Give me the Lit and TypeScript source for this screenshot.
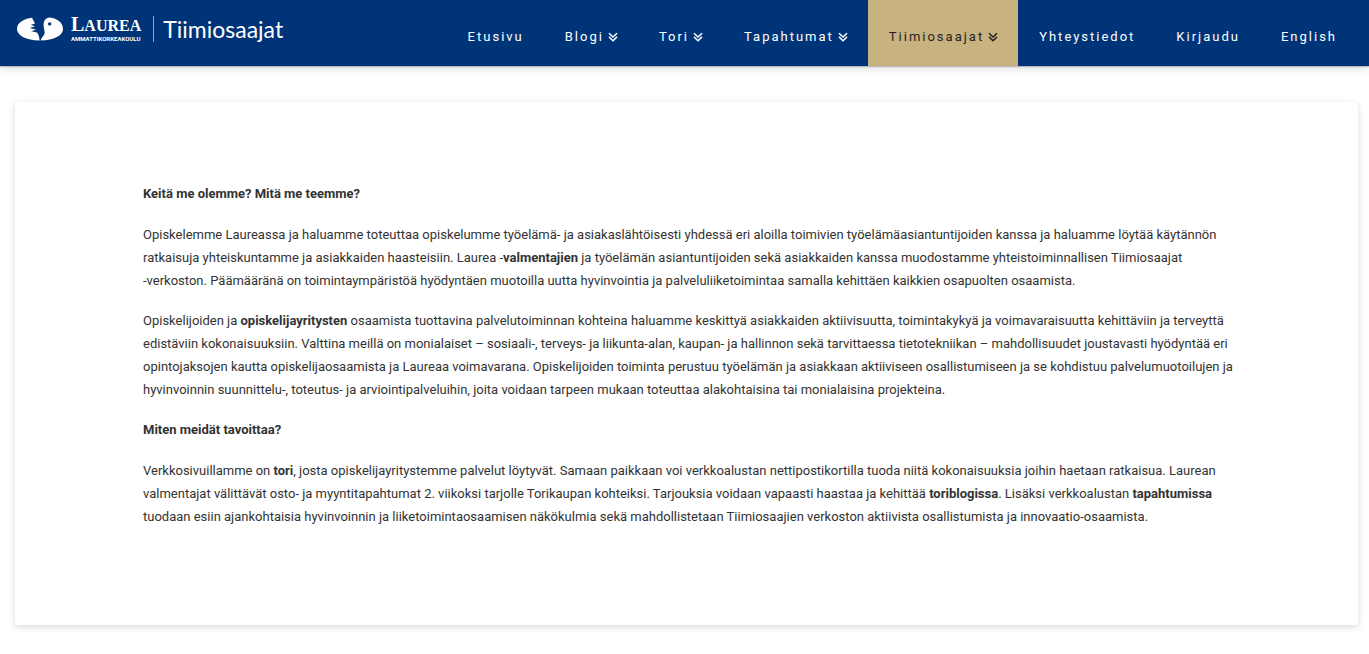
import { LitElement, html, css, svg, nothing } from "lit";
import { customElement, property } from "lit/decorators.js";

interface NavItem {
  label: string;
  menu?: boolean;
  active?: boolean;
}

const NAV: NavItem[] = [
  { label: "Etusivu" },
  { label: "Blogi", menu: true },
  { label: "Tori", menu: true },
  { label: "Tapahtumat", menu: true },
  { label: "Tiimiosaajat", menu: true, active: true },
  { label: "Yhteystiedot" },
  { label: "Kirjaudu" },
  { label: "English" },
];

const chevrons = svg`<path d="M1 1.2 5 5 9 1.2M1 4.9 5 8.7 9 4.9" fill="none" stroke="currentColor" stroke-width="1.5"/>`;

@customElement("site-logo")
export class SiteLogo extends LitElement {
  static styles = css`
    :host {
      display: block;
      flex: none;
    }
    .brand {
      display: flex;
      align-items: center;
      color: #fff;
      text-decoration: none;
    }
    .mark {
      display: block;
      width: 46px;
      height: 24px;
    }
    .school {
      display: flex;
      flex-direction: column;
      margin-left: 8px;
      padding-right: 12px;
    }
    .name {
      font: bold 16px/18px "Liberation Serif", serif;
    }
    .first {
      font-size: 20px;
    }
    .kind {
      font: bold 6px/7px Roboto, sans-serif;
    }
    .team {
      border-left: 1px solid #8fa6c6;
      padding-left: 9px;
      font: 23px/26px Lato, sans-serif;
    }
  `;

  render() {
    return html`
      <a class="brand" href="#">
        <svg class="mark" viewBox="0 0 46 24" aria-hidden="true">
          <path
            fill="#fff"
            d="M15 .8 18 6.400 13.600 8 18.200 9.300 12.600 11 19 12.600 14.400 14.200 20 15.600C21.600 17.400 22.300 20 22.600 23.400 10 23.600 0 18.600 0 12 0 6 6.500 1.800 15 .8Z"
          />
          <path
            fill="#fff"
            fill-rule="evenodd"
            d="M27.500 3.600C29 1.500 30.600.6 32.600.6 40.500 1.400 46 6 46 12 46 18.600 37 23.200 23.600 23.500 24 21.500 25.200 20.200 26.600 18.400 29 15.400 26.600 13.200 26.600 8.600 26.600 6.500 26.800 4.700 27.500 3.600ZM32.700 5.200A1.700 1.700 0 1 0 32.700 8.600 1.700 1.700 0 1 0 32.700 5.200Z"
          />
        </svg>
        <span class="school">
          <span class="name"><span class="first">L</span>AUREA</span>
          <span class="kind">AMMATTIKORKEAKOULU</span>
        </span>
        <span class="team">Tiimiosaajat</span>
      </a>
    `;
  }
}

@customElement("site-nav")
export class SiteNav extends LitElement {
  @property({ attribute: false }) items: NavItem[] = [];

  static styles = css`
    .list {
      display: flex;
      margin: 0;
      padding: 0;
      list-style: none;
    }
    .link {
      display: flex;
      align-items: center;
      box-sizing: border-box;
      height: 66px;
      padding: 8px 20px 0 21px;
      color: #fff;
      font: 13px/20px Roboto, sans-serif;
      letter-spacing: 2px;
      text-decoration: none;
      white-space: nowrap;
    }
    .active {
      background: #c7b280;
      color: #222;
    }
    .arrow {
      width: 10px;
      height: 10px;
      margin-left: 4px;
    }
  `;

  render() {
    return html`
      <nav>
        <ul class="list">
          ${this.items.map(
            (item) => html`
              <li>
                <a class="link ${item.active ? "active" : ""}" href="#"
                  >${item.label}${item.menu
                    ? html`<svg class="arrow" viewBox="0 0 10 10" aria-hidden="true">${chevrons}</svg>`
                    : nothing}</a
                >
              </li>
            `
          )}
        </ul>
      </nav>
    `;
  }
}

@customElement("app-root")
export class AppRoot extends LitElement {
  static styles = css`
    :host {
      display: block;
      min-height: 100vh;
      background: #fff;
      color: #333;
      font: 13px/23px Roboto, sans-serif;
    }
    .header {
      display: flex;
      justify-content: space-between;
      padding: 0 12px 0 17px;
      background: #003478;
      box-shadow: 0 1px 1px rgba(0, 0, 0, 0.2), 0 2px 9px rgba(0, 0, 0, 0.15);
    }
    .logo {
      margin-top: 15px;
    }
    .main {
      padding: 36px 11px 28px 15px;
    }
    .card {
      padding: 80px 120px 97px 128px;
      border-radius: 3px;
      box-shadow: 0 2px 7px rgba(0, 0, 0, 0.15);
    }
    .title {
      margin: 0 0 18px;
      font-size: 13px;
      font-weight: 700;
    }
    .text {
      margin: 0 0 17px;
    }
    .text:last-child {
      margin-bottom: 0;
    }
    .whole {
      white-space: nowrap;
    }
  `;

  render() {
    return html`
      <header class="header">
        <site-logo class="logo"></site-logo>
        <site-nav .items=${NAV}></site-nav>
      </header>
      <main class="main">
        <article class="card">
          <h2 class="title">Keitä me olemme? Mitä me teemme?</h2>
          <p class="text">
            Opiskelemme Laureassa ja haluamme toteuttaa opiskelumme työelämä- ja asiakaslähtöisesti yhdessä eri aloilla
            toimivien työelämäasiantuntijoiden kanssa ja haluamme löytää käytännön ratkaisuja yhteiskuntamme ja
            asiakkaiden haasteisiin. Laurea -<strong>valmentajien</strong> ja työelämän asiantuntijoiden sekä asiakkaiden
            kanssa muodostamme yhteistoiminnallisen Tiimiosaajat <span class="whole">-verkoston.</span> Päämääränä on
            toimintaympäristöä hyödyntäen muotoilla uutta hyvinvointia ja palveluliiketoimintaa samalla kehittäen
            kaikkien osapuolten osaamista.
          </p>
          <p class="text">
            Opiskelijoiden ja <strong>opiskelijayritysten</strong> osaamista tuottavina palvelutoiminnan kohteina
            haluamme keskittyä asiakkaiden aktiivisuutta, toimintakykyä ja voimavaraisuutta kehittäviin ja terveyttä
            edistäviin kokonaisuuksiin. Valttina meillä on monialaiset – sosiaali-, terveys- ja liikunta-alan, kaupan- ja
            hallinnon sekä tarvittaessa tietotekniikan – mahdollisuudet joustavasti hyödyntää eri opintojaksojen kautta
            opiskelijaosaamista ja Laureaa voimavarana. Opiskelijoiden toiminta perustuu työelämän ja asiakkaan
            aktiiviseen osallistumiseen ja se kohdistuu palvelumuotoilujen ja hyvinvoinnin suunnittelu-, toteutus- ja
            arviointipalveluihin, joita voidaan tarpeen mukaan toteuttaa alakohtaisina tai monialaisina projekteina.
          </p>
          <h2 class="title">Miten meidät tavoittaa?</h2>
          <p class="text">
            Verkkosivuillamme on <strong>tori</strong>, josta opiskelijayritystemme palvelut löytyvät. Samaan paikkaan
            voi verkkoalustan nettipostikortilla tuoda niitä kokonaisuuksia joihin haetaan ratkaisua. Laurean valmentajat
            välittävät osto- ja myyntitapahtumat 2. viikoksi tarjolle Torikaupan kohteiksi. Tarjouksia voidaan vapaasti
            haastaa ja kehittää <strong>toriblogissa</strong>. Lisäksi verkkoalustan <strong>tapahtumissa</strong>
            tuodaan esiin ajankohtaisia hyvinvoinnin ja liiketoimintaosaamisen näkökulmia sekä mahdollistetaan
            Tiimiosaajien verkoston aktiivista osallistumista ja innovaatio-osaamista.
          </p>
        </article>
      </main>
    `;
  }
}
